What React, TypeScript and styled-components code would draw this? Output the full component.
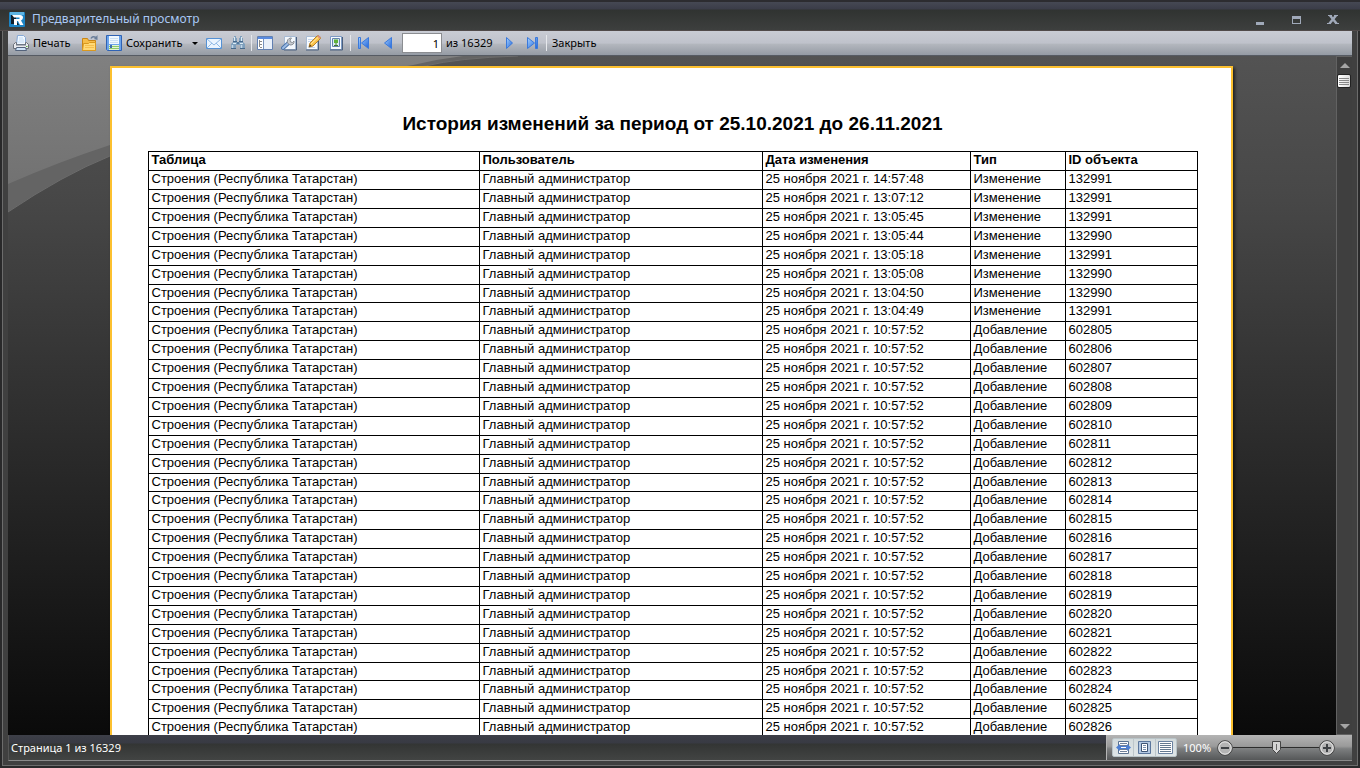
import React from 'react';
import styled, { createGlobalStyle, css } from 'styled-components';

const UI_FONT = '"Noto Sans", "Open Sans", sans-serif';
const REPORT_FONT = '"Liberation Sans", Arial, sans-serif';

const GlobalStyle = createGlobalStyle`
  *, *::before, *::after { box-sizing: border-box; }
  body { margin: 0; background: #2b2c2d; }
  button { font: inherit; color: inherit; }
`;

const Window = styled.div`
  display: flex;
  flex-direction: column;
  height: 100vh;
  overflow: hidden;
  background: #29292a;
  padding: 0 2px 2px;
  font-family: ${UI_FONT};
  font-size: 11px;
  line-height: 16px;
`;

const TitleBar = styled.header`
  display: flex;
  flex: none;
  align-items: center;
  height: 31px;
  margin: 0 -2px;
  padding: 6px 10px 0 9px;
  border-top: 2px solid #2c2c30;
  border-bottom: 1px solid #504a4a;
  background: linear-gradient(#454853 0, #3b3d49 7px, #303331 8px, #3d3f3e 100%);
`;

const WindowTitle = styled.h1`
  flex: 1;
  margin: 0 0 0 7px;
  font-size: 12px;
  font-weight: 400;
  line-height: 16px;
  color: #a9c8f5;
`;

const WindowButton = styled.button`
  display: grid;
  place-items: center;
  width: 36px;
  height: 20px;
  padding: 0;
  border: 0;
  background: none;
`;

const Frame = styled.div`
  display: flex;
  flex: 1;
  flex-direction: column;
  min-height: 0;
  padding: 0 5px 4px;
  border: 1px solid #6c6c6c;
  border-top: 0;
  background: #404040;
`;

const Toolbar = styled.div`
  display: flex;
  flex: none;
  align-items: center;
  height: 25px;
  padding-left: 1px;
  border-bottom: 1px solid #565b63;
  background: linear-gradient(#c9ccd4 0, #bfc2cb 50%, #b2b6bd 56%, #959ba4 100%);
  color: #000;
`;

const ToolButton = styled.button<{ $width?: number }>`
  display: flex;
  flex: none;
  align-items: center;
  gap: 4px;
  width: ${(p) => p.$width ?? 24}px;
  height: 24px;
  padding: 0 4px;
  border: 0;
  background: none;
  white-space: nowrap;
`;

const Separator = styled.span`
  flex: none;
  width: 1px;
  height: 16px;
  margin: 0 1px;
  background: #e6e8ec;
`;

const PageInput = styled.input`
  width: 40px;
  height: 20px;
  margin: 0 4px 0 2px;
  padding: 0 2px;
  border: 1px solid #8b8d91;
  background: #fff;
  font-family: ${UI_FONT};
  font-size: 11px;
  text-align: right;
`;

const PageTotal = styled.label`
  width: 51px;
  white-space: nowrap;
`;

const Workspace = styled.main`
  display: flex;
  flex: 1;
  min-height: 0;
  position: relative;
  background: linear-gradient(#535353 0, #484848 20%, #101010 92%, #0a0a0a 100%);
`;

const Backdrop = styled.svg`
  position: absolute;
  top: 0;
  left: 0;
`;

const Viewport = styled.div`
  position: relative;
  flex: 1;
  min-width: 0;
  overflow: hidden;
  padding: 10px 2px 0 0;
`;

const Paper = styled.article`
  width: 100%;
  max-width: 1123px;
  min-height: 794px;
  margin: 0 auto;
  padding: 46px 33px 36px 36px;
  border: 2px solid #fcc02f;
  background: #fff;
  box-shadow: 2px 2px 3px rgba(0, 0, 0, 0.6);
  color: #000;
  font-family: ${REPORT_FONT};
`;

const ReportTitle = styled.h2`
  margin: 0 0 17px;
  font-size: 19px;
  line-height: 20px;
  text-align: center;
`;

const ReportTable = styled.table`
  width: 100%;
  table-layout: fixed;
  border-collapse: collapse;
  font-size: 13px;
  line-height: 16px;
`;

const cell = css`
  padding: 0 3px;
  border: 1px solid #000;
  text-align: left;
  vertical-align: top;
  white-space: nowrap;
`;

const HeadCell = styled.th`
  ${cell}
`;

const Cell = styled.td`
  ${cell}
`;

/* Row pitch averages 18.9px, so every tenth row is one pixel shorter. */
const Row = styled.tr`
  height: 19px;
  tbody > &:nth-child(10n + 7) { height: 18px; }
`;

const ScrollBar = styled.div`
  position: relative;
  display: flex;
  flex: none;
  flex-direction: column;
  width: 16px;
  border: 1px solid #626262;
  border-right: 0;
  background: #3f3f3f;
`;

const ScrollButton = styled.button`
  display: grid;
  place-items: center;
  height: 16px;
  padding: 0;
  border: 0;
  background: none;
`;

const ScrollThumb = styled.button`
  display: grid;
  place-items: center;
  width: 14px;
  height: 14px;
  margin: 1px 0 auto;
  padding: 0;
  border: 1px solid #222;
  border-radius: 2px;
  background: linear-gradient(90deg, #fff, #ddd);
`;

const StatusBar = styled.footer`
  display: flex;
  flex: none;
  height: 26px;
  border-bottom: 1px solid #8a8a8a;
  border-left: 1px solid #555;
  background: linear-gradient(#3d3f48 0, #383a43 8px, #333534 9px, #424443 100%);
  color: #fff;
`;

const StatusText = styled.span`
  flex: 1;
  padding: 5px 0 0 2px;
`;

const ZoomPanel = styled.div`
  display: flex;
  align-items: center;
  width: 246px;
  padding-left: 5px;
  border-left: 1px solid #b5b5b5;
  background: linear-gradient(#b4b4b4 0, #9a9a9a 45%, #7d7f80 55%, #555758 100%);
`;

const ViewModes = styled.div`
  display: flex;
  width: 65px;
  height: 19px;
  border: 1px solid #b9c4c8;
  border-radius: 2px;
  background: linear-gradient(#d3dbdd, #dfe6e8);
`;

const ViewMode = styled.button`
  display: grid;
  flex: 1;
  place-items: center;
  padding: 0;
  border: 0;
  border-right: 1px solid #bcc6ca;
  background: none;
  &:last-child { border-right: 0; }
`;

const ZoomValue = styled.output`
  width: 40px;
  padding-left: 6px;
`;

const RoundButton = styled.button`
  display: block;
  flex: none;
  width: 16px;
  height: 16px;
  padding: 0;
  border: 0;
  background: none;
`;

const ZoomSlider = styled.input`
  flex: none;
  width: 86px;
  height: 14px;
  margin: 0;
  appearance: none;
  background: linear-gradient(#2c2c2c, #2c2c2c) center / 100% 1px no-repeat;
  &::-webkit-slider-thumb {
    appearance: none;
    width: 9px;
    height: 13px;
    background: url("data:image/svg+xml,%3Csvg xmlns='http://www.w3.org/2000/svg' width='9' height='13'%3E%3Cpath d='M.5.5h8v8l-4 4-4-4z' fill='%23d4d4d4' stroke='%23444'/%3E%3Cpath d='M4.5 3v6' stroke='%23666'/%3E%3C/svg%3E") no-repeat;
  }
`;

type IconProps = { children: React.ReactNode; w?: number; h?: number };

const Icon = ({ children, w = 16, h = 16 }: IconProps) => (
  <svg width={w} height={h} viewBox={`0 0 ${w} ${h}`} fill="none" aria-hidden="true">
    {children}
  </svg>
);

const AppLogo = () => (
  <Icon>
    <rect y="1" width="16" height="15" rx="1" fill="#1c84c4" />
    <path d="M1 1h14v3H1z" fill="#5db4e2" />
    <path d="M2 4h5v9H2z" fill="#10202c" />
    <path d="M3 4h8q3 0 3 2.500 0 2-2 3l2.500 4.500H11L9 10H8v4H5V8h5.500V6.500H5z" fill="#fff" />
    <path d="M8 11l2 3H8z" fill="#10202c" />
  </Icon>
);

const PrintIcon = () => (
  <Icon>
    <path d="M3.500 9.500L4.500.5h6l2 2v7" fill="#f0f7ff" stroke="#86a9d6" />
    <path d="M6 3h4M6 5h5M5 7h6" stroke="#c3dcf5" />
    <path d="M2.500 7.500h1v2h9v-2h1l2 2v4h-15v-4z" fill="#e9eaee" stroke="#6c7078" />
    <path d="M3 9h10v1.500H3z" fill="#6f7886" />
    <path d="M3.500 12.500h9l1 3h-11z" fill="#cfe4fa" stroke="#54637b" />
    <path d="M13 11.500h1.500" stroke="#57ad3f" />
  </Icon>
);

const OpenIcon = () => (
  <Icon>
    <path d="M.5 15.500v-12h5l1 2h7v10z" fill="#f6bd48" stroke="#c98516" />
    <path d="M.5 15.500l1-7h5l1-1h6v8z" fill="#ffd976" stroke="#d9981f" />
    <path d="M3 10.500h9M3 12.500h9" stroke="#f6bf4d" />
    <path d="M9 3.500q1.500-3 5-1" stroke="#6a7e9a" strokeWidth="1.500" />
    <path d="M15.500 0v5L12 4z" fill="#6a7e9a" />
  </Icon>
);

const SaveIcon = () => (
  <Icon>
    <path d="M.5.5h15v15h-14l-1-1z" fill="#6ba4ec" stroke="#2f62b4" />
    <path d="M3 1h10v8H3z" fill="#f1f8ff" />
    <path d="M4 3.500h8M4 5.500h8M4 7.500h8" stroke="#cbe0f5" />
    <path d="M3 10h10v5H3z" fill="#e4f6d4" />
    <path d="M3 11.500h10M3 13.500h10" stroke="#8cc96d" />
    <path d="M4 10h2v3H4z" fill="#426eac" />
  </Icon>
);

const CaretIcon = () => (
  <Icon w={6} h={3}>
    <path d="M0 0h6L3 3z" fill="#000" />
  </Icon>
);

const MailIcon = () => (
  <Icon>
    <path d="M.5 3.500h15v10H.5z" fill="#eaf4ff" stroke="#5591d4" />
    <path d="M1 4l7 6 7-6M1 13l5-5M15 13l-5-5" stroke="#8fb9e6" />
  </Icon>
);

const FindIcon = () => (
  <Icon>
    <path d="M4 1h2v2h1v4h2V3h1V1h2v2h1v4l2 2v5h-5v-4H6v4H1V9l2-2V3h1z" fill="#7f9fbc" />
    <path d="M4.500 2v4M11.500 2v4M3 8.500h3M10 8.500h3" stroke="#dcebf5" />
    <path d="M2.500 10v3M11.500 10v3" stroke="#c1d7e8" strokeWidth="1.500" />
    <path d="M3 6.500h4M9 6.500h4M1 13.500h5M10 13.500h5" stroke="#46688b" />
    <path d="M7 7h2v2H7z" fill="#54789c" />
  </Icon>
);

const OutlineIcon = () => (
  <Icon>
    <path d="M.5 1.500h15v13H.5z" fill="#fff" stroke="#6280b1" />
    <path d="M1 2h14v2H1z" fill="#5a8be0" />
    <path d="M6.500 4v10" stroke="#7692bd" />
    <path d="M2.500 5v7M3 6.500h2M3 9.500h2M3 12.500h2" stroke="#8a8a8a" />
    <path d="M7 4h8v10H7z" fill="#e9f0fa" />
  </Icon>
);

const SheetBase = () => (
  <>
    <path d="M3.500 1.500h11v13h-11z" fill="#f4f8fd" stroke="#a8bbd4" />
    <path d="M3 15h12.500V2" stroke="#4a5f7d" />
  </>
);

const SettingsIcon = () => (
  <Icon>
    <SheetBase />
    <path d="M2 13l5.500-5" stroke="#4c74ab" strokeWidth="4" strokeLinecap="round" />
    <path d="M2 13l5.500-5" stroke="#9dbce4" strokeWidth="2" strokeLinecap="round" />
    <path d="M6.500 8q-1-4 3-5l1 0-1.500 2 .5 2 2 .5 1.500-1.500q.5 4-4 4z" fill="#c9ccd1" stroke="#8b9097" />
  </Icon>
);

const EditIcon = () => (
  <Icon>
    <path d="M1.500 1.500h11v13h-11z" fill="#f8fafd" stroke="#a8bbd4" />
    <path d="M1 15h12.500V5" stroke="#4a5f7d" />
    <path d="M3 4.500h5M3 6.500h3M3 12.500h7" stroke="#c5d5ea" />
    <path d="M5 8l7-7q2-1 3 1t0 2L8 11l-4 1z" fill="#fbc44c" stroke="#b5812b" />
    <path d="M6 9l7-6.500" stroke="#ffe9a8" />
    <path d="M12 1l3 3 .5-2.500L13.500.5z" fill="#d98b84" />
    <path d="M4 12l1-2.500L6.500 11z" fill="#4d3a22" />
  </Icon>
);

const WatermarkIcon = () => (
  <Icon>
    <path d="M1.500 1.500h11v13h-11z" fill="#f8fbff" stroke="#7d9bc4" />
    <path d="M1 15h12.500V2" stroke="#4a5f7d" />
    <path d="M3.500 3.500h7v8h-7z" fill="#dcecf9" stroke="#6484ae" />
    <path d="M5 4.500h4V8H5z" fill="#5fb23a" />
    <path d="M7 8v3M5 10.500h4" stroke="#437c2a" />
  </Icon>
);

const BlueGradient = ({ id }: { id: string }) => (
  <defs>
    <linearGradient id={id} x1="0" x2="1" y1="0" y2="1">
      <stop offset="0" stopColor="#a8d4ff" />
      <stop offset="1" stopColor="#1f62d8" />
    </linearGradient>
  </defs>
);

const NavIcon = ({ kind }: { kind: 'first' | 'prev' | 'next' | 'last' }) => {
  const id = `nav-${kind}`;
  const shapes = {
    first: 'M2.500 2.500h2v11h-2zM12.500 2.500v11L5.500 8z',
    prev: 'M11.500 2.500v11L4.500 8z',
    next: 'M5.500 2.500v11L11.500 8z',
    last: 'M2.500 2.500v11L9.500 8zM10.500 2.500h2v11h-2z',
  };
  return (
    <Icon>
      <BlueGradient id={id} />
      <path d={shapes[kind]} fill={`url(#${id})`} stroke="#3a79dc" />
    </Icon>
  );
};

const RoundIcon = ({ plus }: { plus?: boolean }) => (
  <Icon>
    <circle cx="8" cy="8" r="7.300" fill="#b4b4b4" stroke="#414141" />
    <circle cx="8" cy="8" r="6.200" stroke="#eee" />
    <path d={plus ? 'M4 8h8M8 4v8' : 'M4 8h8'} stroke="#3f4245" strokeWidth="2" />
  </Icon>
);

const FitWidthIcon = () => (
  <Icon w={15} h={13}>
    <path d="M2.500.5h10v12h-10z" fill="#fff" stroke="#5b7391" />
    <path d="M4 2.500h7M4 4.500h7M4 8.500h7M4 10.500h7" stroke="#6f8098" />
    <path d="M0 6.500L4 3v2h7V3l4 3.500L11 10V8H4v2z" fill="#4d7fd2" />
    <path d="M5 6.500h5" stroke="#fff" />
  </Icon>
);

const FitPageIcon = () => (
  <Icon w={15} h={13}>
    <path d="M1.500.5h12v12h-12z" fill="#b3c8e2" stroke="#5a769c" />
    <path d="M4.500 2.500h6v8h-6z" fill="#fff" stroke="#3d5474" />
    <path d="M6 4.500h3M6 6.500h3M6 8.500h3" stroke="#7990ae" />
  </Icon>
);

const ActualSizeIcon = () => (
  <Icon w={15} h={13}>
    <path d="M.5.5h14v12H.5z" fill="#fff" stroke="#6a82a0" />
    <path d="M2 2.500h11M2 4.500h11M2 6.500h11M2 8.500h11M2 10.500h11" stroke="#64798f" />
  </Icon>
);

const ADMIN = 'Главный администратор';
const TABLE_NAME = 'Строения (Республика Татарстан)';

const changes: Array<[string, string, number]> = [
  ['14:57:48', 'Изменение', 132991],
  ['13:07:12', 'Изменение', 132991],
  ['13:05:45', 'Изменение', 132991],
  ['13:05:44', 'Изменение', 132990],
  ['13:05:18', 'Изменение', 132991],
  ['13:05:08', 'Изменение', 132990],
  ['13:04:50', 'Изменение', 132990],
  ['13:04:49', 'Изменение', 132991],
  ...Array.from({ length: 22 }, (_, i): [string, string, number] => ['10:57:52', 'Добавление', 602805 + i]),
];

const columns = [
  { title: 'Таблица', share: 331 },
  { title: 'Пользователь', share: 283 },
  { title: 'Дата изменения', share: 208 },
  { title: 'Тип', share: 95 },
  { title: 'ID объекта', share: 132 },
];

const Col = styled.col<{ $share: number }>`
  width: ${(p) => (p.$share / 1049) * 100}%;
`;

export default function App() {
  return (
    <>
      <GlobalStyle />
      <Window>
        <TitleBar>
          <AppLogo />
          <WindowTitle>Предварительный просмотр</WindowTitle>
          <WindowButton aria-label="Свернуть">
            <Icon><path d="M4 11h8v3H4z" fill="#a0a9b9" /></Icon>
          </WindowButton>
          <WindowButton aria-label="Развернуть">
            <Icon><path d="M4 5h9v8H4zM5 8v4h7V8z" fillRule="evenodd" fill="#a0a9b9" /></Icon>
          </WindowButton>
          <WindowButton aria-label="Закрыть окно">
            <Icon>
              <path d="M4 4.500h4M10 4.500h4M3 12.500h4M11 12.500h4" stroke="#a0a9b9" />
              <path d="M6 4.500l6.500 8M12 4.500l-6.500 8" stroke="#a0a9b9" strokeWidth="2.500" />
            </Icon>
          </WindowButton>
        </TitleBar>
        <Frame>
          <Toolbar role="toolbar">
            <ToolButton $width={69}><PrintIcon />Печать</ToolButton>
            <ToolButton aria-label="Открыть"><OpenIcon /></ToolButton>
            <ToolButton $width={86}><SaveIcon />Сохранить</ToolButton>
            <ToolButton $width={14} aria-label="Форматы сохранения"><CaretIcon /></ToolButton>
            <ToolButton aria-label="Отправить"><MailIcon /></ToolButton>
            <ToolButton aria-label="Найти"><FindIcon /></ToolButton>
            <Separator />
            <ToolButton aria-label="Структура"><OutlineIcon /></ToolButton>
            <ToolButton aria-label="Параметры страницы"><SettingsIcon /></ToolButton>
            <ToolButton aria-label="Редактировать"><EditIcon /></ToolButton>
            <ToolButton aria-label="Водяной знак"><WatermarkIcon /></ToolButton>
            <Separator />
            <ToolButton aria-label="Первая страница"><NavIcon kind="first" /></ToolButton>
            <ToolButton aria-label="Предыдущая страница"><NavIcon kind="prev" /></ToolButton>
            <PageInput id="page" defaultValue="1" />
            <PageTotal htmlFor="page">из 16329</PageTotal>
            <ToolButton aria-label="Следующая страница"><NavIcon kind="next" /></ToolButton>
            <ToolButton aria-label="Последняя страница"><NavIcon kind="last" /></ToolButton>
            <Separator />
            <ToolButton $width={60}>Закрыть</ToolButton>
          </Toolbar>
          <Workspace>
            <Backdrop width="560" height="170" viewBox="0 0 560 170" aria-hidden="true">
              <defs>
                <linearGradient id="glow" x1="0" x2="0" y1="0" y2="1">
                  <stop offset="0" stopColor="#808080" />
                  <stop offset="1" stopColor="#727272" />
                </linearGradient>
              </defs>
              <path d="M0 156Q55 119 102 100Q240 40 417 10Q450 2 510 0H0z" fill="#646464" />
              <path d="M0 156Q55 119 102 100Q240 40 417 10Q450 2 510 0" stroke="#6c6c6c" fill="none" />
              <path d="M0 128Q50 106 102 89Q240 35 405 9Q430 3 455 0H0z" fill="url(#glow)" />
            </Backdrop>
            <Viewport>
              <Paper>
                <ReportTitle>История изменений за период от 25.10.2021 до 26.11.2021</ReportTitle>
                <ReportTable>
                  <colgroup>
                    {columns.map((c) => <Col key={c.title} $share={c.share} />)}
                  </colgroup>
                  <thead>
                    <Row>
                      {columns.map((c) => <HeadCell key={c.title} scope="col">{c.title}</HeadCell>)}
                    </Row>
                  </thead>
                  <tbody>
                    {changes.map(([time, kind, id], i) => (
                      <Row key={i}>
                        <Cell>{TABLE_NAME}</Cell>
                        <Cell>{ADMIN}</Cell>
                        <Cell>25 ноября 2021 г. {time}</Cell>
                        <Cell>{kind}</Cell>
                        <Cell>{id}</Cell>
                      </Row>
                    ))}
                  </tbody>
                </ReportTable>
              </Paper>
            </Viewport>
            <ScrollBar>
              <ScrollButton aria-label="Прокрутить вверх">
                <Icon w={10} h={5}><path d="M0 5l5-5 5 5z" fill="#a5a5a5" /></Icon>
              </ScrollButton>
              <ScrollThumb aria-label="Ползунок прокрутки">
                <Icon w={10} h={9}><path d="M0 1.500h10M0 3.500h10M0 5.500h10M0 7.500h10" stroke="#888" /></Icon>
              </ScrollThumb>
              <ScrollButton aria-label="Прокрутить вниз">
                <Icon w={10} h={5}><path d="M0 0l5 5 5-5z" fill="#a5a5a5" /></Icon>
              </ScrollButton>
            </ScrollBar>
          </Workspace>
          <StatusBar>
            <StatusText>Страница 1 из 16329</StatusText>
            <ZoomPanel>
              <ViewModes>
                <ViewMode aria-label="По ширине"><FitWidthIcon /></ViewMode>
                <ViewMode aria-label="Страница целиком"><FitPageIcon /></ViewMode>
                <ViewMode aria-label="Реальный размер"><ActualSizeIcon /></ViewMode>
              </ViewModes>
              <ZoomValue htmlFor="zoom">100%</ZoomValue>
              <RoundButton aria-label="Уменьшить"><RoundIcon /></RoundButton>
              <ZoomSlider id="zoom" type="range" min="0" max="200" defaultValue="100" aria-label="Масштаб" />
              <RoundButton aria-label="Увеличить"><RoundIcon plus /></RoundButton>
            </ZoomPanel>
          </StatusBar>
        </Frame>
      </Window>
    </>
  );
}
